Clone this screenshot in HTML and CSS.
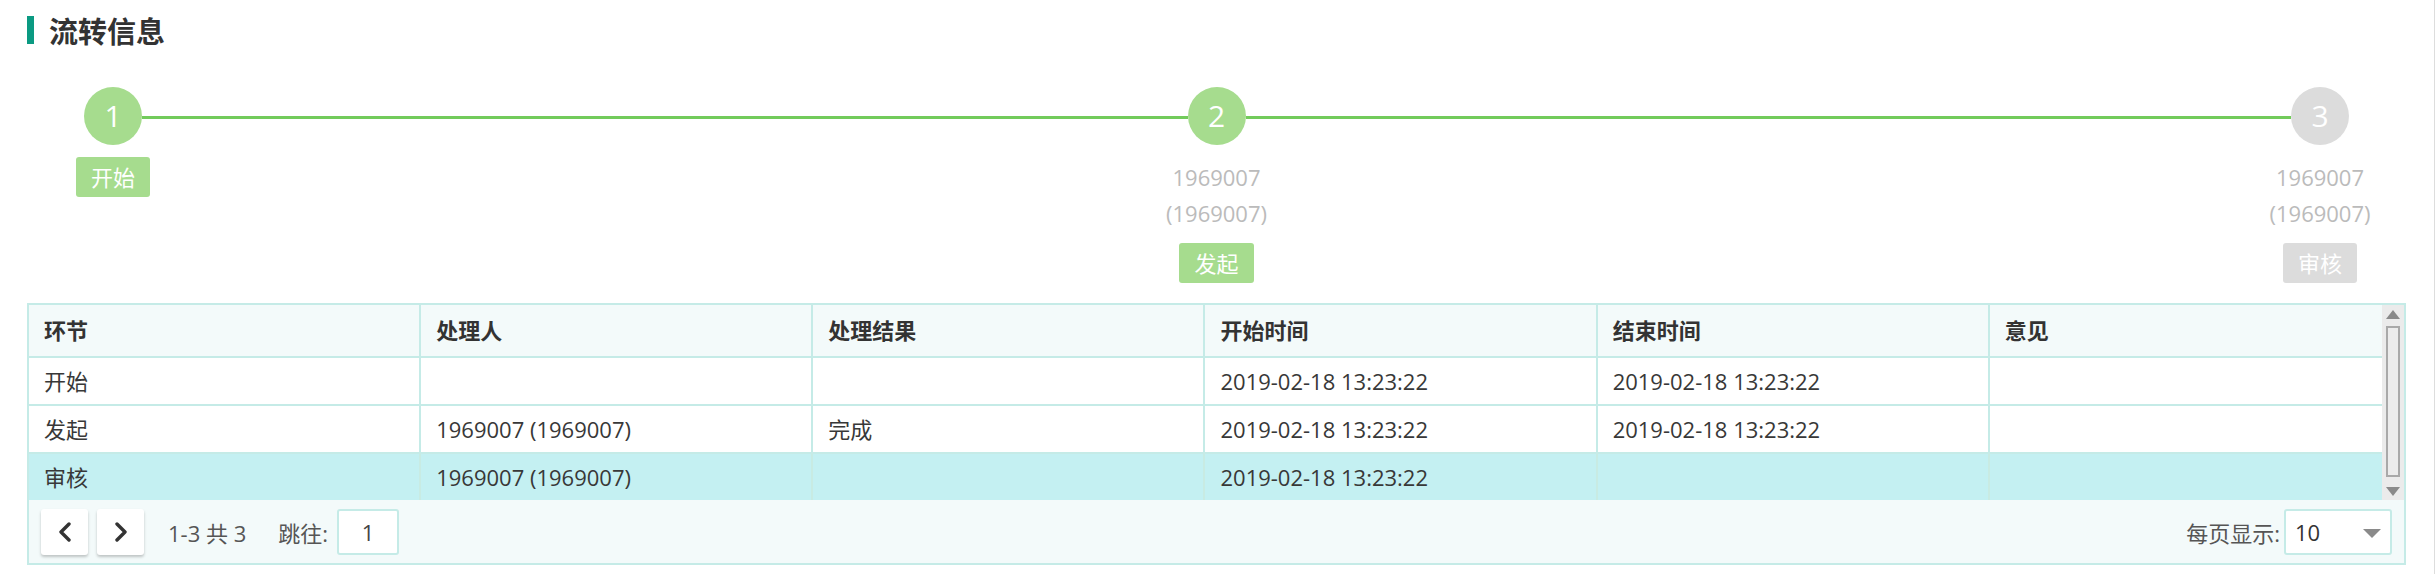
FILE: index.html
```html
<!DOCTYPE html>
<html lang="zh-CN">
<head>
<meta charset="utf-8">
<title>流转信息</title>
<link rel="stylesheet" href="styles.css">
</head>
<body>
<div class="page">
  <h2 class="title"><span class="title-bar"></span>流转信息</h2>

  <div class="steps">
    <div class="step done">
      <div class="circle">1</div>
      <div class="tag">开始</div>
    </div>
    <div class="connector"></div>
    <div class="step done">
      <div class="circle">2</div>
      <div class="names">1969007<br>(1969007)</div>
      <div class="tag">发起</div>
    </div>
    <div class="connector"></div>
    <div class="step todo">
      <div class="circle">3</div>
      <div class="names">1969007<br>(1969007)</div>
      <div class="tag">审核</div>
    </div>
  </div>

  <div class="grid">
    <div class="grid-main">
      <div class="grid-body">
        <table class="datatable">
          <thead>
            <tr><th>环节</th><th>处理人</th><th>处理结果</th><th>开始时间</th><th>结束时间</th><th>意见</th></tr>
          </thead>
          <tbody>
            <tr><td>开始</td><td></td><td></td><td>2019-02-18 13:23:22</td><td>2019-02-18 13:23:22</td><td></td></tr>
            <tr><td>发起</td><td>1969007 (1969007)</td><td>完成</td><td>2019-02-18 13:23:22</td><td>2019-02-18 13:23:22</td><td></td></tr>
            <tr class="selected"><td>审核</td><td>1969007 (1969007)</td><td></td><td>2019-02-18 13:23:22</td><td></td><td></td></tr>
          </tbody>
        </table>
      </div>
      <div class="vscroll">
        <span class="arrow-up"></span>
        <span class="thumb"></span>
        <span class="arrow-down"></span>
      </div>
    </div>
    <div class="grid-footer">
      <div class="pager">
        <button class="pbtn" type="button" aria-label="上一页">
          <svg width="14" height="20" viewBox="0 0 14 20"><path d="M11 2 L3 10 L11 18" fill="none" stroke="#333" stroke-width="3.4" stroke-linecap="round" stroke-linejoin="round"/></svg>
        </button>
        <button class="pbtn" type="button" aria-label="下一页">
          <svg width="14" height="20" viewBox="0 0 14 20"><path d="M3 2 L11 10 L3 18" fill="none" stroke="#333" stroke-width="3.4" stroke-linecap="round" stroke-linejoin="round"/></svg>
        </button>
        <span class="range">1-3 共 3</span>
        <span class="jump">跳往:</span>
        <span class="jump-input">1</span>
      </div>
      <div class="pagesize">
        <span>每页显示:</span>
        <span class="select"><span>10</span><span class="caret"></span></span>
      </div>
    </div>
  </div>
</div>
</body>
</html>
```

FILE: styles.css
```css
html, body {
  margin: 0;
  padding: 0;
  background: #fff;
}
body {
  font-family: "Open Sans", "Noto Sans CJK SC", sans-serif;
  font-size: 22px;
  color: #333;
}
.page {
  box-sizing: border-box;
  width: 2435px;
  height: 574px;
  border-right: 1px solid #dddddd;
  padding: 16px 28px 0 27px;
}
.title {
  display: flex;
  align-items: center;
  margin: 0;
  height: 28px;
  font-size: 29px;
  line-height: 28px;
  font-weight: bold;
  color: #333;
  font-family: "Noto Sans CJK SC", sans-serif;
}
.title-bar {
  width: 7px;
  height: 28px;
  background: #0b9a82;
  margin-right: 15px;
}

/* steps */
.steps {
  display: flex;
  margin-top: 43px;
}
.step {
  width: 172px;
  flex: none;
  display: flex;
  flex-direction: column;
  align-items: center;
  position: relative;
  z-index: 1;
}
.connector {
  flex: 1;
  height: 3px;
  margin: 29px -57px 0;
  background: #72cb5b;
}
.circle {
  width: 58px;
  height: 58px;
  border-radius: 50%;
  background: #a6dc8e;
  color: #fff;
  font-size: 30px;
  line-height: 58px;
  text-align: center;
}
.step.todo .circle { background: #dcdcdc; }
.names {
  margin-top: 14px;
  line-height: 36px;
  color: #bbbbbb;
  text-align: center;
  white-space: nowrap;
}
.tag {
  margin-top: 12px;
  height: 40px;
  line-height: 40px;
  padding: 0 15px;
  border-radius: 3px;
  background: #a6dc8e;
  color: #fff;
}
.step.todo .tag { background: #dcdcdc; }

/* grid */
.grid {
  margin-top: 20px;
  border: 2px solid #c5ebe7;
}
.grid-main {
  display: flex;
}
.grid-body {
  flex: 1;
  min-width: 0;
}
.datatable {
  width: 100%;
  border-collapse: separate;
  border-spacing: 0;
  table-layout: fixed;
}
.datatable th,
.datatable td {
  padding: 0 15px;
  text-align: left;
  border-right: 2px solid #c5ebe7;
  border-bottom: 2px solid #c5ebe7;
  white-space: nowrap;
  overflow: hidden;
}
.datatable th:last-child,
.datatable td:last-child {
  border-right: 0;
}
.datatable th {
  height: 51px;
  line-height: 51px;
  background: #f3fafa;
  font-weight: bold;
  color: #333;
}
.datatable td {
  height: 46px;
  line-height: 46px;
  background: #fff;
  color: #383838;
}
.datatable tr.selected td {
  background: #c4f0f2;
  border-right-color: #c8ebe3;
}
.datatable tr.selected td:last-child { border-right: 0; }
.datatable tbody tr:last-child td { border-bottom: 0; }

.vscroll {
  width: 22px;
  flex: none;
  background: #ebebeb;
  display: flex;
  flex-direction: column;
  align-items: center;
  padding-top: 5px;
  box-sizing: border-box;
}
.arrow-up {
  width: 0;
  height: 0;
  border-left: 7px solid transparent;
  border-right: 7px solid transparent;
  border-bottom: 9px solid #8a8a8a;
}
.thumb {
  margin-top: 7px;
  box-sizing: border-box;
  width: 14px;
  height: 151px;
  border: 2px solid #a9a9a9;
  background: #ececec;
}
.arrow-down {
  margin-top: 10px;
  width: 0;
  height: 0;
  border-left: 7px solid transparent;
  border-right: 7px solid transparent;
  border-top: 9px solid #8a8a8a;
}

.grid-footer {
  display: flex;
  justify-content: space-between;
  align-items: center;
  height: 63px;
  padding: 0 12px;
  background: #f3fafa;
  color: #555;
}
.pager, .pagesize {
  display: flex;
  align-items: center;
}
.pbtn {
  width: 47px;
  height: 46px;
  margin: 0 9px 0 0;
  padding: 0;
  border: 0;
  border-radius: 3px;
  background: #fff;
  box-shadow: 0 2px 3px rgba(0, 0, 0, 0.22);
  display: flex;
  align-items: center;
  justify-content: center;
}
.range {
  margin-left: 15px;
}
.jump {
  margin-left: 32px;
}
.jump-input {
  box-sizing: border-box;
  margin-left: 9px;
  width: 62px;
  height: 46px;
  line-height: 42px;
  border: 2px solid #c5ebe7;
  border-radius: 3px;
  background: #fff;
  text-align: center;
  color: #444;
}
.select {
  box-sizing: border-box;
  margin-left: 4px;
  width: 108px;
  height: 46px;
  border: 2px solid #c5ebe7;
  border-radius: 3px;
  background: #fff;
  display: flex;
  align-items: center;
  justify-content: space-between;
  padding: 0 9px 0 9px;
  color: #333;
}
.caret {
  width: 0;
  height: 0;
  border-left: 9px solid transparent;
  border-right: 9px solid transparent;
  border-top: 9px solid #8a8a8a;
  margin-top: 4px;
}
```
